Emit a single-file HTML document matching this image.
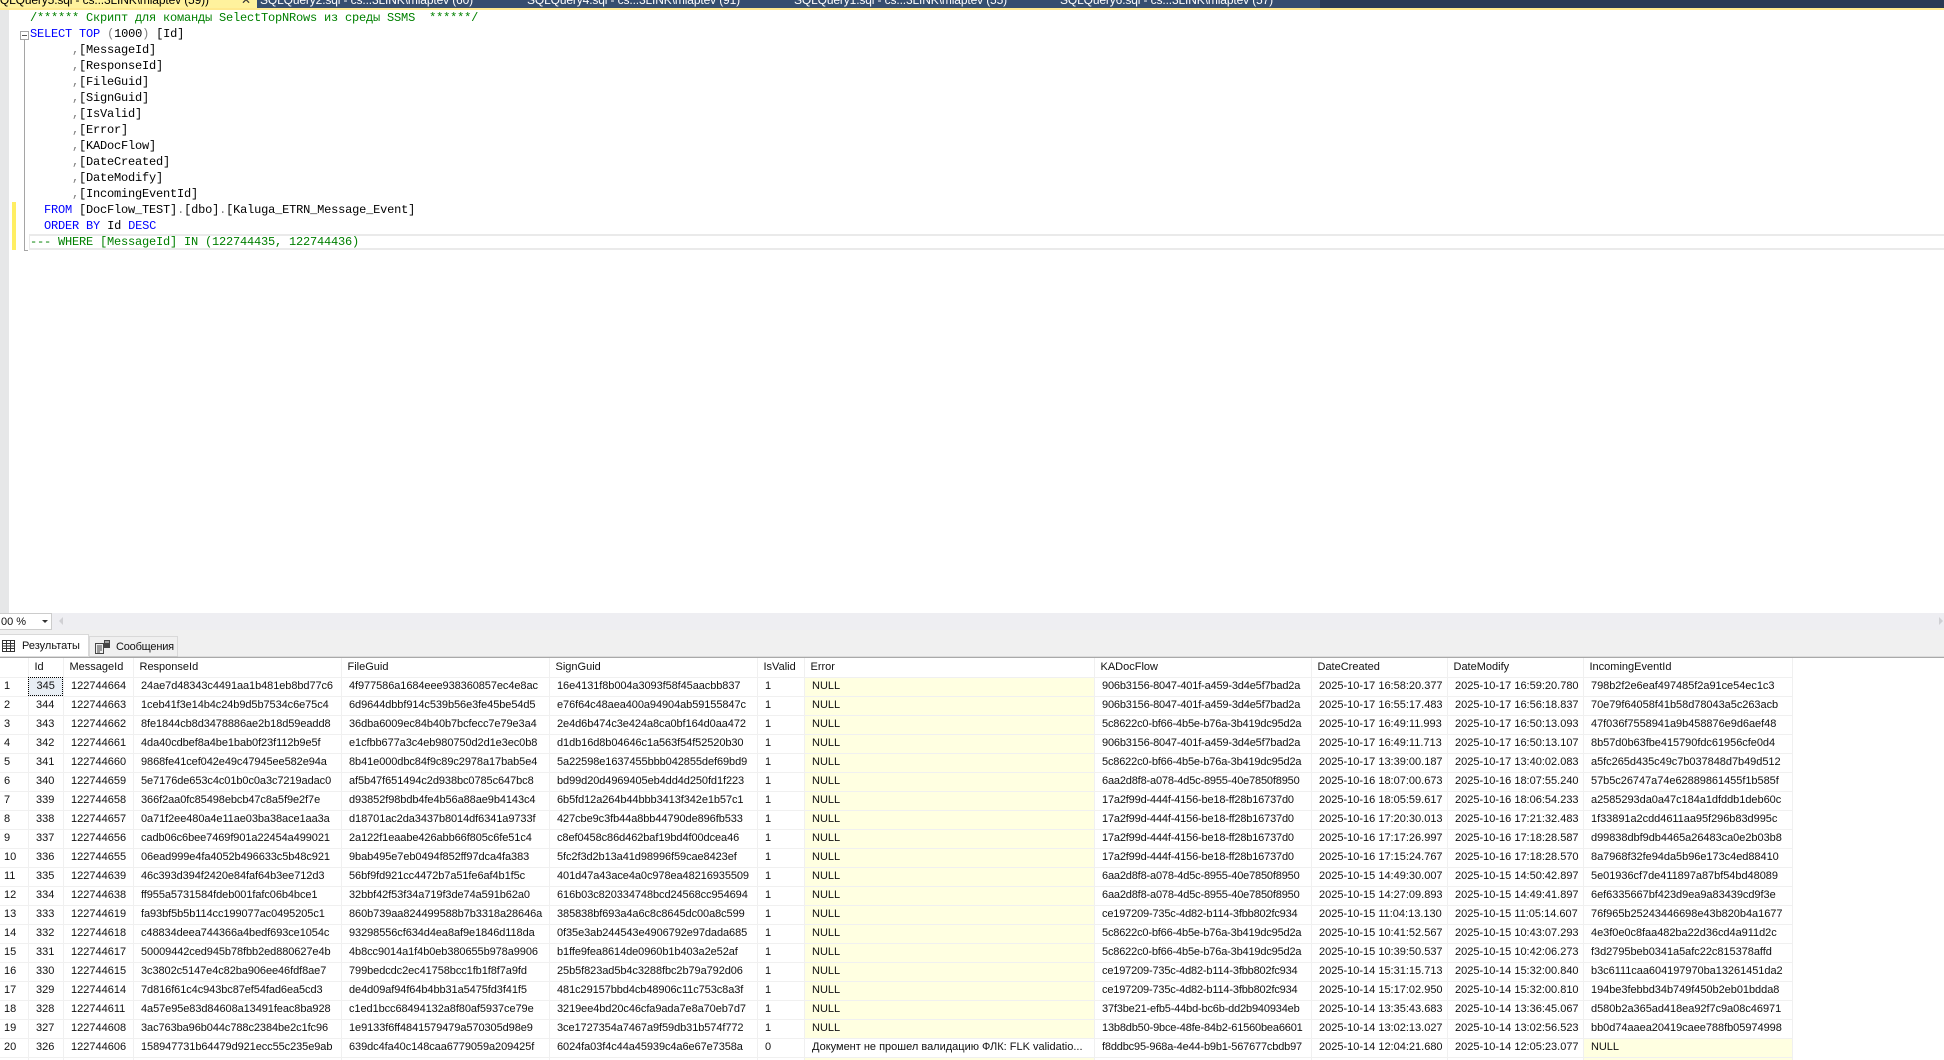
<!DOCTYPE html>
<html lang="ru"><head><meta charset="utf-8"><title>SSMS</title>
<style>
*{box-sizing:border-box}
html,body{margin:0;padding:0;width:1944px;height:1060px;overflow:hidden;background:#fff}
#page{position:relative;width:1944px;height:1060px;overflow:hidden;background:#fff}
.a{position:absolute}
#tabs{left:0;top:0;width:1944px;height:8px;background:#293955;overflow:hidden}
#tabs span{position:absolute;top:-8px;font:12px/16px "Liberation Sans",sans-serif;letter-spacing:-.13px;color:#fff;white-space:pre}
#code{left:30px;top:10px;margin:0;font:12px/16px "Liberation Mono","DejaVu Sans Mono",monospace;letter-spacing:-.2px;color:#000;white-space:pre}
.k{color:#00f}.c{color:#008000}.g{color:#808080}
#grid{left:0;top:657px;border-collapse:collapse;table-layout:fixed;width:1792px;font:11px/17px "Liberation Sans","Noto Sans CJK JP",sans-serif;color:#111}
#grid td,#grid th{height:19px;padding:0 0 0 7.5px;border-right:1px solid #f0f0f0;border-bottom:1px solid #f0f0f0;overflow:hidden;white-space:nowrap;text-align:left;font-weight:normal}
#grid td{padding-bottom:1px}
#grid th{height:20px;padding-left:6px;padding-top:2px;background:#fff}
#grid td:first-child{padding-left:4px}
#grid td.n{background:#ffffe1}
#grid td.f{background:#e8eef4;outline:1px dotted #000;outline-offset:-1px;padding-left:8px}
#grid td:nth-child(4),#grid td:nth-child(5),#grid td:nth-child(6){letter-spacing:-.08px}
#grid td:nth-child(9){letter-spacing:-.17px}
#grid td:nth-child(12){letter-spacing:-.04px}
#grid tr.last td{height:3px;line-height:0;font-size:0;padding:0;border-bottom:0}
</style></head>
<body>
<div id="page">
<div class="a" id="tabs">
<div class="a" style="left:0;top:0;width:257px;height:8px;background:#fff29d"></div>
<div class="a" style="left:257px;top:0;width:1063px;height:8px;background:#364e6f"></div>
<span style="left:-8px;color:#000">SQLQuery5.sql - cs...3LINK\mlaptev (59))</span>
<span style="left:227px;top:-10px;color:#333">▪</span>
<span style="left:241px;color:#333">✕</span>
<span style="left:260px">SQLQuery2.sql - cs...3LINK\mlaptev (60)</span>
<span style="left:527px">SQLQuery4.sql - cs...3LINK\mlaptev (91)</span>
<span style="left:794px">SQLQuery1.sql - cs...3LINK\mlaptev (55)</span>
<span style="left:1060px">SQLQuery6.sql - cs...3LINK\mlaptev (57)</span>
</div>
<div class="a" style="left:0;top:8px;width:1944px;height:2px;background:#ffe98f"></div>

<div class="a" style="left:0;top:10px;width:9px;height:603px;background:#e6e7e8"></div>
<div class="a" style="left:12px;top:202px;width:4px;height:48px;background:#ffee62"></div>
<div class="a" style="left:20px;top:31px;width:9px;height:9px;border:1px solid #a5a5a5;background:#fff"></div>
<div class="a" style="left:22px;top:35px;width:5px;height:1px;background:#555"></div>
<div class="a" style="left:24px;top:40px;width:1px;height:210px;background:#a5a5a5"></div>
<div class="a" style="left:24px;top:250px;width:4px;height:1px;background:#a5a5a5"></div>
<div class="a" style="left:29px;top:234px;width:1915px;height:16px;border-top:2px solid #eaeaea;border-bottom:2px solid #eaeaea;border-left:1px solid #eaeaea"></div>

<pre class="a" id="code"><span class="c">/****** Скрипт для команды SelectTopNRows из среды SSMS  ******/</span>
<span class="k">SELECT</span> <span class="k">TOP</span> <span class="g">(</span>1000<span class="g">)</span> [Id]
      <span class="g">,</span>[MessageId]
      <span class="g">,</span>[ResponseId]
      <span class="g">,</span>[FileGuid]
      <span class="g">,</span>[SignGuid]
      <span class="g">,</span>[IsValid]
      <span class="g">,</span>[Error]
      <span class="g">,</span>[KADocFlow]
      <span class="g">,</span>[DateCreated]
      <span class="g">,</span>[DateModify]
      <span class="g">,</span>[IncomingEventId]
  <span class="k">FROM</span> [DocFlow_TEST]<span class="g">.</span>[dbo]<span class="g">.</span>[Kaluga_ETRN_Message_Event]
  <span class="k">ORDER</span> <span class="k">BY</span> Id <span class="k">DESC</span>
<span class="c">--- WHERE [MessageId] IN (122744435, 122744436)</span></pre>

<div class="a" style="left:0;top:613px;width:1944px;height:17px;background:#eeeef2"></div>
<div class="a" style="left:-1px;top:613px;width:53px;height:17px;background:#fff;border:1px solid #ccc;font:11px/17px 'Liberation Sans',sans-serif;color:#111;padding-left:1px">00 %</div>
<svg class="a" style="left:42px;top:620px" width="7" height="4"><path d="M0 0H6L3 3Z" fill="#333"/></svg>
<svg class="a" style="left:58px;top:617px" width="6" height="9"><path d="M5 0V8L1 4Z" fill="#d0d0d4"/></svg>
<svg class="a" style="left:1938px;top:617px" width="6" height="9"><path d="M1 0V8L5 4Z" fill="#d0d0d4"/></svg>

<div class="a" style="left:0;top:630px;width:1944px;height:27px;background:#f0f0f0"></div>
<div class="a" style="left:89px;top:636px;width:89px;height:21px;background:#f0f0f0;border:1px solid #d9d9d9;border-bottom:0"></div>
<div class="a" style="left:0;top:634px;width:89px;height:23px;background:#fff;border-right:1px solid #d9d9d9;border-top:1px solid #d9d9d9"></div>
<svg class="a" style="left:2px;top:640px" width="13" height="12" viewBox="0 0 13 12"><path d="M.5.5h12v11H.5zM.5 3.5h12M.5 6h12M.5 8.5h12M4.5 .5v11M8.5 .5v11" fill="none" stroke="#333"/></svg>
<span class="a" style="left:22px;top:637px;font:11px/18px 'Liberation Sans',sans-serif;color:#111">Результаты</span>
<svg class="a" style="left:95px;top:640px" width="16" height="14" viewBox="0 0 16 14"><path d="M.5 3.5h8v10h-8zM2 6h5M2 8h5M2 10h5M2 12h3" fill="none" stroke="#444"/><path d="M9 0h6v8H9z" fill="#444"/><path d="M10 2h4" stroke="#fff"/></svg>
<span class="a" style="left:116px;top:638px;font:11px/18px 'Liberation Sans',sans-serif;letter-spacing:-.2px;color:#111">Сообщения</span>

<table class="a" id="grid">
<colgroup><col style="width:28px"><col style="width:35px"><col style="width:70px"><col style="width:208px"><col style="width:208px"><col style="width:208px"><col style="width:47px"><col style="width:290px"><col style="width:217px"><col style="width:136px"><col style="width:136px"><col style="width:209px"></colgroup>
<tr><th></th><th>Id</th><th>MessageId</th><th>ResponseId</th><th>FileGuid</th><th>SignGuid</th><th>IsValid</th><th>Error</th><th>KADocFlow</th><th>DateCreated</th><th>DateModify</th><th>IncomingEventId</th></tr>
<tr><td>1</td><td class="f">345</td><td>122744664</td><td>24ae7d48343c4491aa1b481eb8bd77c6</td><td>4f977586a1684eee938360857ec4e8ac</td><td>16e4131f8b004a3093f58f45aacbb837</td><td>1</td><td class="n">NULL</td><td>906b3156-8047-401f-a459-3d4e5f7bad2a</td><td>2025-10-17 16:58:20.377</td><td>2025-10-17 16:59:20.780</td><td>798b2f2e6eaf497485f2a91ce54ec1c3</td></tr>
<tr><td>2</td><td>344</td><td>122744663</td><td>1ceb41f3e14b4c24b9d5b7534c6e75c4</td><td>6d9644dbbf914c539b56e3fe45be54d5</td><td>e76f64c48aea400a94904ab59155847c</td><td>1</td><td class="n">NULL</td><td>906b3156-8047-401f-a459-3d4e5f7bad2a</td><td>2025-10-17 16:55:17.483</td><td>2025-10-17 16:56:18.837</td><td>70e79f64058f41b58d78043a5c263acb</td></tr>
<tr><td>3</td><td>343</td><td>122744662</td><td>8fe1844cb8d3478886ae2b18d59eadd8</td><td>36dba6009ec84b40b7bcfecc7e79e3a4</td><td>2e4d6b474c3e424a8ca0bf164d0aa472</td><td>1</td><td class="n">NULL</td><td>5c8622c0-bf66-4b5e-b76a-3b419dc95d2a</td><td>2025-10-17 16:49:11.993</td><td>2025-10-17 16:50:13.093</td><td>47f036f7558941a9b458876e9d6aef48</td></tr>
<tr><td>4</td><td>342</td><td>122744661</td><td>4da40cdbef8a4be1bab0f23f112b9e5f</td><td>e1cfbb677a3c4eb980750d2d1e3ec0b8</td><td>d1db16d8b04646c1a563f54f52520b30</td><td>1</td><td class="n">NULL</td><td>906b3156-8047-401f-a459-3d4e5f7bad2a</td><td>2025-10-17 16:49:11.713</td><td>2025-10-17 16:50:13.107</td><td>8b57d0b63fbe415790fdc61956cfe0d4</td></tr>
<tr><td>5</td><td>341</td><td>122744660</td><td>9868fe41cef042e49c47945ee582e94a</td><td>8b41e000dbc84f9c89c2978a17bab5e4</td><td>5a22598e1637455bbb042855def69bd9</td><td>1</td><td class="n">NULL</td><td>5c8622c0-bf66-4b5e-b76a-3b419dc95d2a</td><td>2025-10-17 13:39:00.187</td><td>2025-10-17 13:40:02.083</td><td>a5fc265d435c49c7b037848d7b49d512</td></tr>
<tr><td>6</td><td>340</td><td>122744659</td><td>5e7176de653c4c01b0c0a3c7219adac0</td><td>af5b47f651494c2d938bc0785c647bc8</td><td>bd99d20d4969405eb4dd4d250fd1f223</td><td>1</td><td class="n">NULL</td><td>6aa2d8f8-a078-4d5c-8955-40e7850f8950</td><td>2025-10-16 18:07:00.673</td><td>2025-10-16 18:07:55.240</td><td>57b5c26747a74e62889861455f1b585f</td></tr>
<tr><td>7</td><td>339</td><td>122744658</td><td>366f2aa0fc85498ebcb47c8a5f9e2f7e</td><td>d93852f98bdb4fe4b56a88ae9b4143c4</td><td>6b5fd12a264b44bbb3413f342e1b57c1</td><td>1</td><td class="n">NULL</td><td>17a2f99d-444f-4156-be18-ff28b16737d0</td><td>2025-10-16 18:05:59.617</td><td>2025-10-16 18:06:54.233</td><td>a2585293da0a47c184a1dfddb1deb60c</td></tr>
<tr><td>8</td><td>338</td><td>122744657</td><td>0a71f2ee480a4e11ae03ba38ace1aa3a</td><td>d18701ac2da3437b8014df6341a9733f</td><td>427cbe9c3fb44a8bb44790de896fb533</td><td>1</td><td class="n">NULL</td><td>17a2f99d-444f-4156-be18-ff28b16737d0</td><td>2025-10-16 17:20:30.013</td><td>2025-10-16 17:21:32.483</td><td>1f33891a2cdd4611aa95f296b83d995c</td></tr>
<tr><td>9</td><td>337</td><td>122744656</td><td>cadb06c6bee7469f901a22454a499021</td><td>2a122f1eaabe426abb66f805c6fe51c4</td><td>c8ef0458c86d462baf19bd4f00dcea46</td><td>1</td><td class="n">NULL</td><td>17a2f99d-444f-4156-be18-ff28b16737d0</td><td>2025-10-16 17:17:26.997</td><td>2025-10-16 17:18:28.587</td><td>d99838dbf9db4465a26483ca0e2b03b8</td></tr>
<tr><td>10</td><td>336</td><td>122744655</td><td>06ead999e4fa4052b496633c5b48c921</td><td>9bab495e7eb0494f852ff97dca4fa383</td><td>5fc2f3d2b13a41d98996f59cae8423ef</td><td>1</td><td class="n">NULL</td><td>17a2f99d-444f-4156-be18-ff28b16737d0</td><td>2025-10-16 17:15:24.767</td><td>2025-10-16 17:18:28.570</td><td>8a7968f32fe94da5b96e173c4ed88410</td></tr>
<tr><td>11</td><td>335</td><td>122744639</td><td>46c393d394f2420e84faf64b3ee712d3</td><td>56bf9fd921cc4472b7a51fe6af4b1f5c</td><td>401d47a43ace4a0c978ea48216935509</td><td>1</td><td class="n">NULL</td><td>6aa2d8f8-a078-4d5c-8955-40e7850f8950</td><td>2025-10-15 14:49:30.007</td><td>2025-10-15 14:50:42.897</td><td>5e01936cf7de411897a87bf54bd48089</td></tr>
<tr><td>12</td><td>334</td><td>122744638</td><td>ff955a5731584fdeb001fafc06b4bce1</td><td>32bbf42f53f34a719f3de74a591b62a0</td><td>616b03c820334748bcd24568cc954694</td><td>1</td><td class="n">NULL</td><td>6aa2d8f8-a078-4d5c-8955-40e7850f8950</td><td>2025-10-15 14:27:09.893</td><td>2025-10-15 14:49:41.897</td><td>6ef6335667bf423d9ea9a83439cd9f3e</td></tr>
<tr><td>13</td><td>333</td><td>122744619</td><td>fa93bf5b5b114cc199077ac0495205c1</td><td>860b739aa824499588b7b3318a28646a</td><td>385838bf693a4a6c8c8645dc00a8c599</td><td>1</td><td class="n">NULL</td><td>ce197209-735c-4d82-b114-3fbb802fc934</td><td>2025-10-15 11:04:13.130</td><td>2025-10-15 11:05:14.607</td><td>76f965b25243446698e43b820b4a1677</td></tr>
<tr><td>14</td><td>332</td><td>122744618</td><td>c48834deea744366a4bedf693ce1054c</td><td>93298556cf634d4ea8af9e1846d118da</td><td>0f35e3ab244543e4906792e97dada685</td><td>1</td><td class="n">NULL</td><td>5c8622c0-bf66-4b5e-b76a-3b419dc95d2a</td><td>2025-10-15 10:41:52.567</td><td>2025-10-15 10:43:07.293</td><td>4e3f0e0c8faa482ba22d36cd4a911d2c</td></tr>
<tr><td>15</td><td>331</td><td>122744617</td><td>50009442ced945b78fbb2ed880627e4b</td><td>4b8cc9014a1f4b0eb380655b978a9906</td><td>b1ffe9fea8614de0960b1b403a2e52af</td><td>1</td><td class="n">NULL</td><td>5c8622c0-bf66-4b5e-b76a-3b419dc95d2a</td><td>2025-10-15 10:39:50.537</td><td>2025-10-15 10:42:06.273</td><td>f3d2795beb0341a5afc22c815378affd</td></tr>
<tr><td>16</td><td>330</td><td>122744615</td><td>3c3802c5147e4c82ba906ee46fdf8ae7</td><td>799bedcdc2ec41758bcc1fb1f8f7a9fd</td><td>25b5f823ad5b4c3288fbc2b79a792d06</td><td>1</td><td class="n">NULL</td><td>ce197209-735c-4d82-b114-3fbb802fc934</td><td>2025-10-14 15:31:15.713</td><td>2025-10-14 15:32:00.840</td><td>b3c6111caa604197970ba13261451da2</td></tr>
<tr><td>17</td><td>329</td><td>122744614</td><td>7d816f61c4c943bc87ef54fad6ea5cd3</td><td>de4d09af94f64b4bb31a5475fd3f41f5</td><td>481c29157bbd4cb48906c11c753c8a3f</td><td>1</td><td class="n">NULL</td><td>ce197209-735c-4d82-b114-3fbb802fc934</td><td>2025-10-14 15:17:02.950</td><td>2025-10-14 15:32:00.810</td><td>194be3febbd34b749f450b2eb01bdda8</td></tr>
<tr><td>18</td><td>328</td><td>122744611</td><td>4a57e95e83d84608a13491feac8ba928</td><td>c1ed1bcc68494132a8f80af5937ce79e</td><td>3219ee4bd20c46cfa9ada7e8a70eb7d7</td><td>1</td><td class="n">NULL</td><td>37f3be21-efb5-44bd-bc6b-dd2b940934eb</td><td>2025-10-14 13:35:43.683</td><td>2025-10-14 13:36:45.067</td><td>d580b2a365ad418ea92f7c9a08c46971</td></tr>
<tr><td>19</td><td>327</td><td>122744608</td><td>3ac763ba96b044c788c2384be2c1fc96</td><td>1e9133f6ff4841579479a570305d98e9</td><td>3ce1727354a7467a9f59db31b574f772</td><td>1</td><td class="n">NULL</td><td>13b8db50-9bce-48fe-84b2-61560bea6601</td><td>2025-10-14 13:02:13.027</td><td>2025-10-14 13:02:56.523</td><td>bb0d74aaea20419caee788fb05974998</td></tr>
<tr><td>20</td><td>326</td><td>122744606</td><td>158947731b64479d921ecc55c235e9ab</td><td>639dc4fa40c148caa6779059a209425f</td><td>6024fa03f4c44a45939c4a6e67e7358a</td><td>0</td><td>Документ не прошел валидацию  ФЛК: FLK validatio...</td><td>f8ddbc95-968a-4e44-b9b1-567677cbdb97</td><td>2025-10-14 12:04:21.680</td><td>2025-10-14 12:05:23.077</td><td class="n">NULL</td></tr>
<tr class="last"><td></td><td></td><td></td><td></td><td></td><td></td><td></td><td class="n"></td><td></td><td></td><td></td><td class="n"></td></tr>
</table>
<div class="a" style="left:0;top:656px;width:1944px;height:1px;background:#dcdcdc"></div>
<div class="a" style="left:89px;top:656px;width:89px;height:1px;background:#c8c8c8"></div>
<div class="a" style="left:0;top:657px;width:1944px;height:1px;background:#a9a9a9"></div>
</div>
</body></html>
